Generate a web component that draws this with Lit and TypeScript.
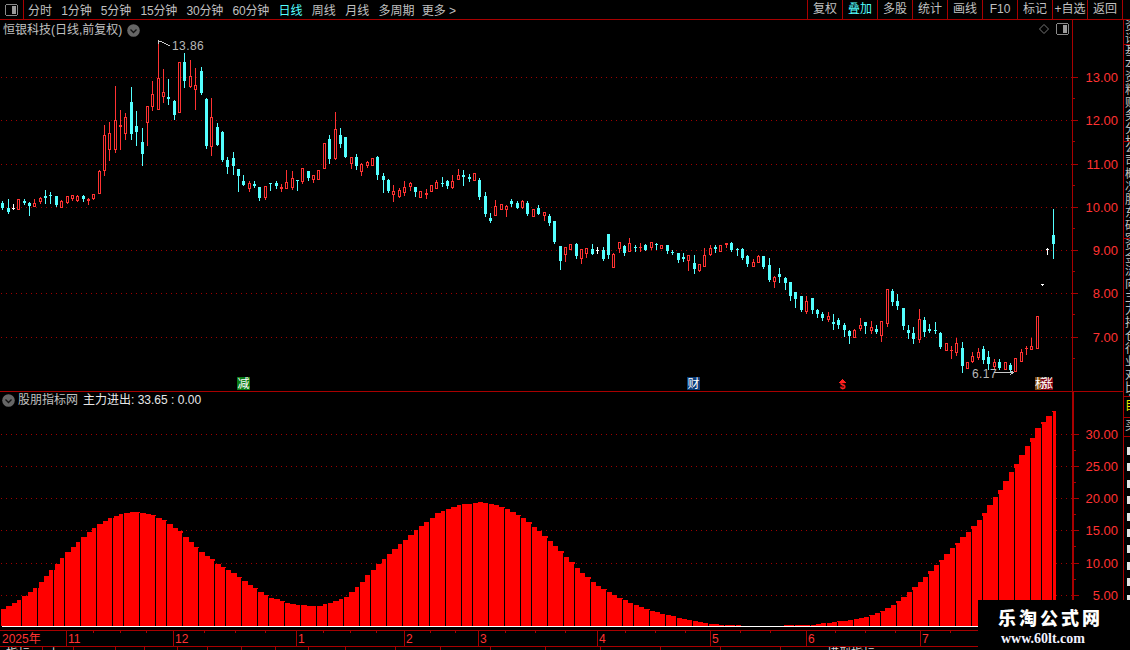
import { LitElement, html, css, svg } from "lit";
import { customElement } from "lit/decorators.js";

// kind, body top, body bottom, high, low (screen y). high/low fall back to the body.
type Candle = [string, number, number, number?, number?];

const candles: Candle[] = [
  ["c",203,208,201,209],["c",208,212,199,213],["w",208,209,204,209],["r",199,209],["c",201,203,199,204],
  ["c",203,206,202,215],["r",203,206,199,206],["r",198,201,197,203],["c",196,198,190,203],["c",195,196,192,203],
  ["c",196,205,196,206],["r",201,207,200,207],["r",196,202,196,203],["r",195,198,195,200],["r",196,200,195,201],
  ["c",196,199,195,201],["r",199,201,198,204],["r",194,198,194,199],["r",171,193,170,193],["r",135,170,125,175],
  ["r",133,149,122,160],["r",120,149,86,152],["r",125,127,110,149],["r",117,133,113,139],["c",102,134,87,139],
  ["c",126,132,111,145],["c",142,154,128,165],["r",106,122,106,145],["r",94,106,81,110],["r",78,109,43,109],
  ["r",92,96,69,102],["c",97,99,79,104],["c",101,115,100,119],["r",62,112],["c",62,81,53,87],
  ["r",76,86,60,87],["r",85,89,68,109],["c",71,93,67,94],["c",99,146,98,148],["r",117,146,98,155],
  ["c",127,145,123,145],["c",132,160,131,161],["c",160,167,157,173],["c",158,166,152,174],["c",169,176,169,191],
  ["c",181,185,175,185],["r",183,188,181,191],["c",184,186,181,187],["c",187,198,187,200],["r",186,197,186,199],
  ["c",183,184,183,190],["c",183,186,181,188],["r",187,189,184,191],["r",182,188,170,188],["r",178,187,171,189],
  ["c",180,181,180,190],["r",168,181,168,183],["c",171,178,171,180],["r",175,179,175,182],["r",170,179],
  ["r",143,168],["c",139,159,135,163],["r",129,158,112,159],["c",135,144,128,147],["c",137,157],
  ["r",157,163,157,168],["c",157,166,154,169],["r",164,171,163,175],["r",162,165,161,167],["r",158,165],
  ["c",157,175,156,179],["c",176,180,173,192],["c",180,191,179,192],["r",191,194,185,201],["r",190,196,188,197],
  ["r",187,192,181,195],["r",183,186,182,190],["c",187,192,187,196],["r",191,197],["r",193,195,189,198],
  ["r",185,191],["r",182,188,180,188],["c",183,184,177,186],["c",181,186,180,188],["r",181,187,175,188],
  ["r",175,179,169,179],["c",175,177,170,185],["c",177,179,174,181],["r",173,180],["c",180,197,178,199],
  ["c",196,214,192,216],["c",218,221,213,222],["r",206,215,200,215],["r",204,209],["r",206,209,205,216],
  ["c",201,204,199,206],["c",203,208,201,208],["r",201,207,200,208],["c",203,214,201,215],["r",209,216],
  ["c",208,214,205,214],["r",212,215,212,220],["c",216,223,214,225],["c",221,242,221,243],["c",246,261,246,269],
  ["r",247,254,247,261],["r",244,249],["c",244,256,243,258],["r",249,258,249,263],["r",248,253,248,257],
  ["c",249,254,244,254],["w",250,251,247,253],["c",250,259,247,260],["c",234,255,234,258],["r",254,267,253,267],
  ["r",242,248,242,252],["c",246,253,245,255],["r",243,251,238,251],["c",247,248,245,251],["r",247,248,243,251],
  ["c",245,250,244,250],["r",242,247,242,249],["c",244,245,243,249],["r",245,248],["c",245,251,245,253],
  ["c",252,253,250,254],["c",253,260,253,262],["c",257,259,253,261],["r",255,260,255,270],["c",263,269,255,273],
  ["r",264,270,264,271],["r",255,266,248,266],["r",248,254,245,255],["c",247,249,245,252],["r",245,251],
  ["r",243,245,243,247],["c",243,250,242,251],["c",249,250,248,255],["c",249,258,248,259],["c",256,264,255,266],
  ["r",262,266,259,266],["r",256,262,255,262],["c",256,267,256,268],["c",265,280,258,281],["r",277,281,276,287],
  ["c",274,277,268,282],["c",278,283,277,289],["c",282,296,282,300],["c",292,299,292,307],["c",296,310,296,311],
  ["r",301,311,296,313],["c",298,310,298,313],["c",310,314,309,317],["c",314,318,312,320],["r",316,319,312,321],
  ["c",322,324,314,329],["c",320,325,318,328],["c",325,330,323,336],["c",331,336,330,343],["r",330,337,329,337],
  ["r",325,328,318,330],["c",322,326,322,333],["r",327,330,321,333],["c",329,332,325,333],["r",321,335,321,341],
  ["r",289,323,289,326],["c",291,302,289,305],["c",301,306,294,309],["c",308,326,308,329],["c",330,333,325,338],
  ["c",333,339,327,343],["r",319,339,309,342],["c",320,332,317,336],["c",329,331,324,332],["c",330,331,322,333],
  ["c",333,347,332,348],["r",343,350],["r",350,351,346,358],["r",343,352,338,355],["c",348,366,342,372],
  ["r",362,368],["r",356,361,352,362],["r",352,357,348,359],["c",349,360,346,363],["c",357,364,351,369],
  ["r",362,366,359,369],["c",362,368,359,369],["r",362,369],["c",365,370,363,371],["r",358,371],
  ["r",352,361,349,361],["r",348,349,346,354],["r",346,349,338,349],["r",316,348],["w",284,285],
  ["w",249,250,248,254],["c",235,244,209,258],
];

// top edge of the histogram, sampled as [x, y] and read between samples
const curve = [
  [0,611],[8,607],[16,602],[27,595],[38,586],[50,572],[65,555],[80,540],[92,530],[105,521],[120,514],[135,512],
  [150,514],[165,520],[180,531],[200,550],[220,565],[240,577],[255,588],[270,597],[285,602],[300,605],[318,606],
  [332,603],[345,598],[358,587],[370,573],[390,553],[410,536],[425,523],[440,512],[460,505],[480,502],[495,504],
  [510,510],[525,519],[540,531],[555,545],[570,560],[585,575],[600,587],[620,598],[640,607],[660,613],[680,618],
  [700,622],[720,625],[760,626],[810,625],[835,622],[850,620],[865,617],[880,612],[890,607],[900,600],[915,587],
  [930,572],[945,556],[960,540],[970,530],[980,519],[990,505],[1000,491],[1010,475],[1020,458],[1030,442],
  [1040,425],[1047,418],[1053,411],[1058,411],
];

const topAt = (x: number) => {
  for (let i = 1; i < curve.length; i++) {
    if (x <= curve[i][0]) {
      const [x0, y0] = curve[i - 1];
      const [x1, y1] = curve[i];
      return Math.round(y0 + ((y1 - y0) * (x - x0)) / (x1 - x0));
    }
  }
  return 626;
};

const RED = "#ff3232";
const barX = (i: number) => Math.floor(2.7 + 5.36 * i);

const gapColumns = () => {
  const out: number[] = [];
  let g = 21;
  let run = 3;
  while (g < 1056) {
    for (let k = 0; k < run && g < 1056; k++) {
      out.push(g);
      g += 16;
    }
    g -= 5;
    run = run === 3 ? 4 : 3;
  }
  return out;
};

const dotted = (y: number) => svg`<line class="dots" x1="1" x2="1072" y1=${y + 0.5} y2=${y + 0.5}></line>`;

const candleMark = ([k, top, bot, hi, lo]: Candle, i: number) => {
  const x = barX(i);
  const color = k === "r" ? RED : k === "c" ? "#54ffff" : "#fff";
  const high = hi ?? top;
  const low = lo ?? bot;
  const wick = svg`<rect x=${x} y=${high} width="1" height=${low - high + 1} fill=${color}></rect>`;
  if (k === "r" && bot - top > 2) {
    return svg`${wick}<rect x=${x - 0.5} y=${top + 0.5} width="2" height=${bot - top} fill="#000" stroke=${color}></rect>`;
  }
  return svg`${wick}<rect x=${x - 1} y=${top} width="3" height=${Math.max(bot - top, 1)} fill=${color}></rect>`;
};

@customElement("app-root")
export class AppRoot extends LitElement {
  static styles = css`
    :host {
      display: block;
      position: relative;
      width: 1130px;
      height: 650px;
      overflow: hidden;
      background: #000;
      color: #c0c0c0;
      font: 12px "Liberation Sans", "Noto Sans CJK SC", sans-serif;
    }
    svg {
      display: block;
      shape-rendering: crispEdges;
    }
    svg.soft {
      shape-rendering: auto;
    }
    .top {
      display: flex;
      align-items: center;
      height: 19px;
      border-bottom: 1px solid #a80000;
    }
    .switch {
      display: flex;
      align-items: center;
      justify-content: center;
      width: 23px;
      height: 19px;
      margin-right: 4px;
      border-right: 1px solid #a80000;
    }
    .tabs {
      display: flex;
      gap: 9.3px;
      white-space: nowrap;
    }
    .tabs .num {
      letter-spacing: -0.15px;
    }
    .tabs .more {
      margin-left: -2px;
    }
    .on {
      color: #54ffff;
    }
    .tools {
      display: flex;
      margin-left: auto;
      margin-right: 7px;
      border-right: 1px solid #a80000;
    }
    .tools span {
      flex: 0 0 35px;
      box-sizing: border-box;
      height: 19px;
      line-height: 18px;
      text-align: center;
      white-space: nowrap;
      border-left: 1px solid #a80000;
    }
    .main {
      display: flex;
    }
    .charts {
      width: 1123px;
    }
    .pane {
      position: relative;
      display: flex;
    }
    .upper {
      height: 371px;
      border-bottom: 1px solid #a80000;
    }
    .lower {
      height: 238px;
    }
    .axis {
      flex: 0 0 auto;
      border-left: 1px solid #a80000;
    }
    .lower .axis {
      border-left-width: 2px;
      border-top: 1px solid #a80000;
      margin-top: -1px;
    }
    .head {
      position: absolute;
      left: 3px;
      top: 2px;
      display: flex;
      align-items: center;
      gap: 5px;
      line-height: 16px;
      white-space: nowrap;
    }
    .lower .head {
      left: 2px;
      top: 0;
      gap: 3px;
    }
    .value {
      margin-left: 2px;
      color: #e8e8e8;
    }
    .corner {
      position: absolute;
      top: 3px;
      right: 54px;
      display: flex;
      align-items: center;
      gap: 7px;
    }
    .dots {
      stroke: #a00000;
      stroke-dasharray: 1 4;
    }
    .price {
      fill: #ff3232;
      font-size: 13px;
      text-anchor: end;
    }
    .note {
      fill: #b8b8b8;
      font-size: 12px;
      letter-spacing: 0.4px;
    }
    .tag {
      fill: #fff;
      font-size: 12px;
      text-anchor: middle;
    }
    .date {
      fill: #ff3232;
      font-size: 12px;
    }
    .clip {
      fill: #d8d8d8;
      font-size: 12px;
    }
    .side {
      width: 6px;
      height: 630px;
      border-left: 1px solid #a80000;
      overflow: hidden;
    }
    .cell {
      overflow: hidden;
      box-sizing: border-box;
      border-bottom: 1px solid #a80000;
      padding-left: 1px;
      line-height: 13px;
    }
    .cell span {
      display: block;
      width: 12px;
    }
    .h25 {
      height: 25px;
    }
    .h97 {
      height: 97px;
    }
    .h158 {
      height: 158px;
    }
    .h21 {
      height: 21px;
      padding-top: 3px;
      color: #e8e800;
    }
    .h19 {
      height: 19px;
      padding-top: 2px;
    }
    .stubs {
      display: flex;
      flex-direction: column;
      gap: 8.4px;
      padding: 10px 0 0 3px;
    }
    .stubs i {
      display: block;
      flex: none;
      width: 3px;
      height: 8px;
      background: #e4e4e4;
    }
    .mark {
      position: absolute;
      right: 0;
      bottom: 0;
      width: 152px;
      height: 50px;
      box-sizing: border-box;
      padding: 7px 0 0 20px;
      background: #000;
      color: #fff;
      font-family: "Liberation Serif", "Noto Sans CJK SC", serif;
      font-weight: 700;
    }
    .mark b {
      display: block;
      font-size: 18px;
      line-height: 24px;
      letter-spacing: 3px;
    }
    .mark i {
      display: block;
      margin-left: 3px;
      font-style: normal;
      font-size: 14px;
      line-height: 16px;
      color: #f0f0ff;
    }
  `;

  private icon() {
    return html`<svg width="13" height="12" viewBox="0 0 13 12">
      <rect x="0.5" y="0.5" width="12" height="11" rx="2" fill="none" stroke="#8a8a8a"></rect>
      <rect x="7" y="2" width="4" height="8" fill="#9a9a9a"></rect>
    </svg>`;
  }

  private chevron() {
    return html`<svg class="soft" width="13" height="13" viewBox="0 0 13 13">
      <circle cx="6.5" cy="6.5" r="6.3" fill="#666"></circle>
      <path d="M3.5 5.5 6.5 8.5 9.5 5.5" fill="none" stroke="#111" stroke-width="1.3"></path>
    </svg>`;
  }

  private upperChart() {
    return html`<svg width="1072" height="371" viewBox="0 20 1072 371">
      ${[77, 120, 164, 207, 250, 293, 337].map(dotted)}
      ${candles.map(candleMark)}
      <path d="M158.5 44V41L162 42 166 44 170 46" fill="none" stroke="#c8c8c8"></path>
      <text class="note" x="172" y="50">13.86</text>
      <text class="note" x="972" y="378">6.17</text>
      <path d="M994 372.5H1013M1010 370l3 2.5-3 2.5" fill="none" stroke="#c8c8c8"></path>
      <rect x="237" y="377" width="13" height="13" fill="#0a7a14"></rect>
      <text class="tag" x="243.5" y="388">减</text>
      <rect x="687" y="377" width="13" height="13" fill="#0a3c78"></rect>
      <text class="tag" x="693.5" y="388">财</text>
      <path d="M842.5 379 846 382.5H839Z" fill="#ff2020"></path>
      <text x="842.5" y="389" fill="#ff2020" font-size="10" font-weight="700" text-anchor="middle">$</text>
      <rect x="1035" y="377" width="7" height="13" fill="#7a4a10"></rect>
      <rect x="1041" y="378" width="12" height="12" fill="#800010"></rect>
      <text class="tag" x="1041" y="388">标</text>
      <text class="tag" x="1047" y="388">涨</text>
    </svg>`;
  }

  private lowerChart() {
    const bars = candles.map((_, i) => {
      const x = Math.round(5.36 * i) + 1;
      const w = Math.min(Math.round(5.36 * (i + 1)) + 1, 1056) - x;
      const y = topAt(x + w / 2);
      return svg`<rect x=${x} y=${y} width=${w} height=${626 - y} fill="#ff0000"></rect>`;
    });
    const gaps = gapColumns().map((x) => {
      const y = topAt(x);
      return svg`<rect x=${x} y=${y} width="1" height=${626 - y} fill="#000"></rect>`;
    });
    return html`<svg width="1072" height="238" viewBox="0 392 1072 238">
      ${[434, 466, 498, 530, 563, 595].map(dotted)}
      ${bars}${gaps}
      <rect x="2" y="626" width="1054" height="1" fill="#fff"></rect>
    </svg>`;
  }

  private axis(top: number, height: number, width: number, labels: [number, string][], half: number) {
    const ticks = labels.map(([y, t]) => svg`
      <rect x="0" y=${y} width="5" height="1" fill="#a80000"></rect>
      <rect x="0" y=${y + half} width="2" height="1" fill="#a80000"></rect>
      <text class="price" x=${width - 5} y=${y + 5}>${t}</text>`);
    return html`<svg class="axis" width=${width} height=${height} viewBox="0 ${top} ${width} ${height}">${ticks}</svg>`;
  }

  private dateAxis() {
    const months: [number, string][] = [
      [66, "11"], [173, "12"], [296, "1"], [404, "2"], [478, "3"], [597, "4"], [710, "5"], [806, "6"], [920, "7"],
    ];
    const minor = [93, 120, 146, 204, 235, 265, 323, 350, 376, 430, 455, 505, 535, 565, 625, 655, 685, 740, 770, 835, 865, 895, 950];
    const below = [42, 73, 115, 144, 177, 207, 241, 275, 308, 345, 395, 440, 490, 545, 600, 660, 720, 780];
    return html`<svg width="1123" height="20" viewBox="0 630 1123 20">
      <rect x="0" y="630" width="1072" height="1" fill="#a80000"></rect>
      <rect x="0" y="646" width="1123" height="1" fill="#a80000"></rect>
      ${months.map(([x, t]) => svg`
        <rect x=${x} y="631" width="1" height="15" fill="#a80000"></rect>
        <text class="date" x=${x + 2} y="643">${t}</text>`)}
      ${minor.map((x) => svg`<rect x=${x} y="631" width="1" height="2" fill="#a80000"></rect>`)}
      ${below.map((x) => svg`<rect x=${x} y="647" width="1" height="3" fill="#a80000"></rect>`)}
      <text class="date" x="2" y="643">2025年</text>
      <text class="clip" x="6" y="658">指标</text>
      <text class="clip" x="48" y="658">上</text>
      <text class="clip" x="827" y="658">模型指标</text>
    </svg>`;
  }

  render() {
    const tabs = ["分时", "1分钟", "5分钟", "15分钟", "30分钟", "60分钟", "日线", "周线", "月线", "多周期", "更多 >"];
    const tools = ["复权", "叠加", "多股", "统计", "画线", "F10", "标记", "+自选", "返回"];
    const upperLabels: [number, string][] = [
      [77, "13.00"], [120, "12.00"], [164, "11.00"], [207, "10.00"], [250, "9.00"], [293, "8.00"], [337, "7.00"],
    ];
    const lowerLabels: [number, string][] = [
      [434, "30.00"], [466, "25.00"], [498, "20.00"], [530, "15.00"], [563, "10.00"], [595, "5.00"],
    ];
    const tabClass = (t: string) => (t === "日线" ? "on" : t.startsWith("更多") ? "more" : /\d/.test(t) ? "num" : "");
    return html`
      <div class="top">
        <div class="switch">${this.icon()}</div>
        <div class="tabs">
          ${tabs.map((t) => html`<span class=${tabClass(t)}>${t}</span>`)}
        </div>
        <div class="tools">
          ${tools.map((t) => html`<span class=${t === "叠加" ? "on" : ""}>${t}</span>`)}
        </div>
      </div>
      <div class="main">
        <div class="charts">
          <div class="pane upper">
            ${this.upperChart()}
            ${this.axis(20, 371, 50, upperLabels, 21)}
            <div class="head"><span>恒银科技(日线,前复权)</span>${this.chevron()}</div>
            <div class="corner">
              <svg class="soft" width="10" height="10" viewBox="0 0 10 10">
                <path d="M5 .5 9.5 5 5 9.5 .5 5Z" fill="none" stroke="#777"></path>
              </svg>
              ${this.icon()}
            </div>
          </div>
          <div class="pane lower">
            ${this.lowerChart()}
            ${this.axis(392, 238, 49, lowerLabels, 16)}
            <div class="head">
              ${this.chevron()}<span>股朋指标网</span>
              <span class="value">主力进出: 33.65 : 0.00</span>
            </div>
          </div>
          ${this.dateAxis()}
        </div>
        <div class="side">
          <div class="cell h25"><span>资讯</span></div>
          <div class="cell h97"><span>基本资料财务分析</span></div>
          <div class="cell h97"><span>公司概况股东研究</span></div>
          <div class="cell h158"><span>资金流向主力持仓行业对比龙虎榜</span></div>
          <div class="cell h21"><span>目</span></div>
          <div class="cell h19"><span>买</span></div>
          <div class="stubs">${Array.from({ length: 12 }, () => html`<i></i>`)}</div>
        </div>
      </div>
      <div class="mark"><b>乐淘公式网</b><i>www.60lt.com</i></div>
    `;
  }
}
